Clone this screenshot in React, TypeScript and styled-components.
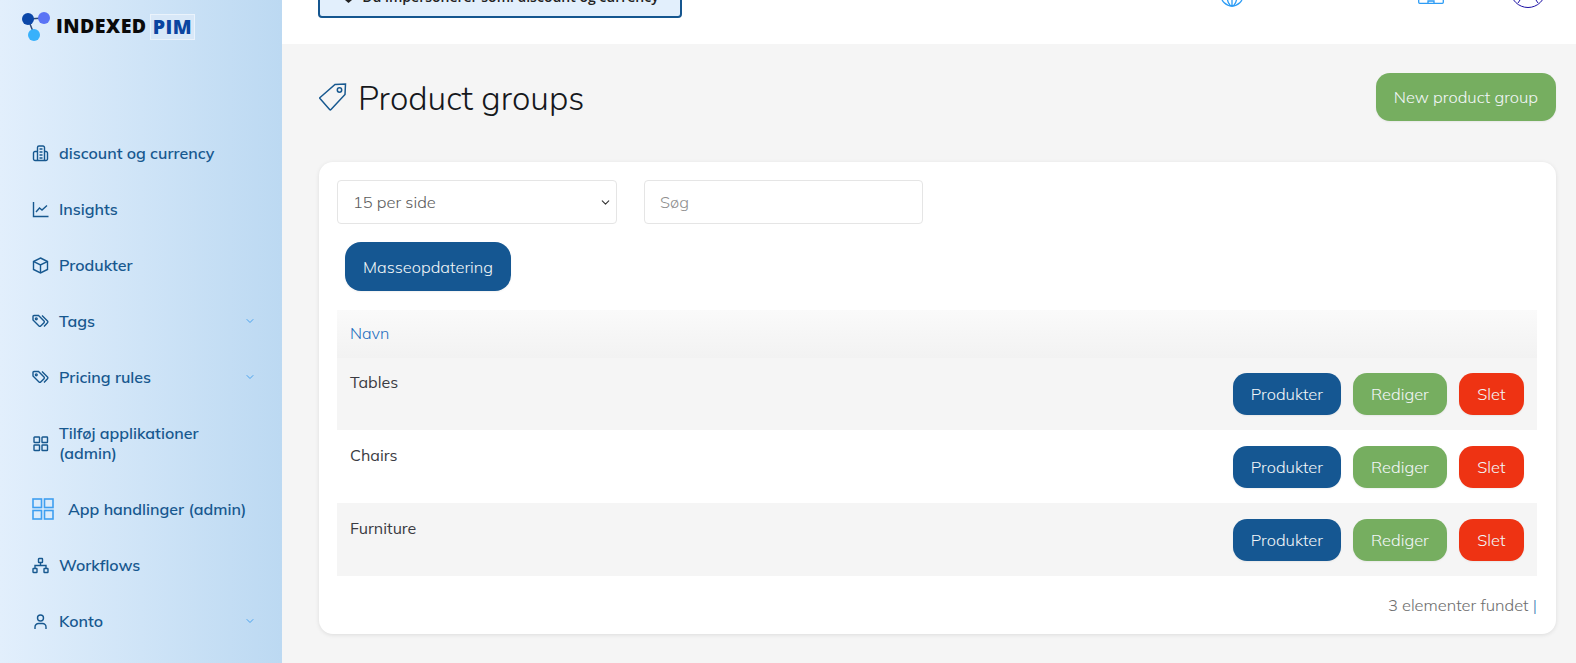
import React from 'react'
import styled, { createGlobalStyle } from 'styled-components'
import { ChevronDown } from 'lucide-react'

const FONT = `"Mulish", "Muli", "Nunito", "Open Sans", "Noto Sans", sans-serif`

const GlobalStyle = createGlobalStyle`
  html, body {
    margin: 0;
    height: 100%;
    overflow: hidden;
    background: #f5f5f5;
    font-family: ${FONT};
  }
  * { box-sizing: border-box; }
`

const Page = styled.div`
  display: flex;
  width: 100%;
  height: 663px;
  overflow: hidden;
`

const Sidebar = styled.aside`
  flex: 0 0 282px;
  background: linear-gradient(90deg, #e2effc 0%, #bcd9f2 100%);
  display: flex;
  flex-direction: column;
`

const Logo = styled.div`
  display: flex;
  align-items: flex-start;
  height: 125px;
  padding: 12px 0 0 22px;
`

const LogoWord = styled.span`
  font-family: "Open Sans", sans-serif;
  font-weight: 800;
  font-size: 19.5px;
  letter-spacing: 0.5px;
  line-height: 24px;
  color: #0a0a0a;
  margin: 2px 0 0 5px;
`

const LogoPim = styled(LogoWord)`
  color: #0b45a0;
  background: #d8e8f8;
  border: 1px solid #eaf3fc;
  margin-left: 3px;
  padding: 0 2px;
  height: 26px;
`

const NavList = styled.nav`
  display: flex;
  flex-direction: column;
`

const NavItem = styled.a<{ $tall?: boolean }>`
  display: flex;
  align-items: center;
  height: ${p => (p.$tall ? 76 : 56)}px;
  padding: 0 26px 0 32px;
  color: #17588f;
  font-size: 16px;
  font-weight: 600;
  line-height: 20px;
`

const NavIcon = styled.svg`
  flex: 0 0 17px;
  width: 17px;
  height: 17px;
  margin-right: 10px;
  fill: none;
  stroke: #17588f;
  stroke-width: 1.4;
`

const BigNavIcon = styled.svg`
  flex: 0 0 22px;
  width: 22px;
  height: 22px;
  margin-right: 14px;
  fill: none;
  stroke: #3f9ff0;
  stroke-width: 1.6;
`

const NavLabel = styled.span`
  flex: 1;
  max-width: 175px;
`

const WideLabel = styled.span`
  flex: 1;
  white-space: nowrap;
`

const Caret = styled(ChevronDown)`
  color: #4aa3ee;
  width: 12px;
  height: 12px;
  margin-left: auto;
`

const Main = styled.main`
  flex: 1;
  min-width: 0;
  display: flex;
  flex-direction: column;
`

const TopBar = styled.header`
  flex: 0 0 44px;
  height: 44px;
  background: #fff;
  display: flex;
  align-items: flex-end;
  padding: 0 30px 0 36px;
  overflow: hidden;
`

const ImpersonateBanner = styled.div`
  width: 364px;
  height: 40px;
  flex: none;
  margin-bottom: 26px;
  padding-bottom: 4px;
  display: flex;
  align-items: center;
  justify-content: center;
  gap: 6px;
  background: #e2effc;
  border: 2px solid #15568f;
  border-radius: 4px;
  color: #222;
  font-family: "Open Sans", sans-serif;
  font-size: 14px;
  font-weight: 600;
  white-space: nowrap;
`

const BannerIcon = styled.svg`
  width: 15px;
  height: 15px;
  flex: none;
  fill: #222;
`

const TopIcons = styled.div`
  margin-left: auto;
  display: flex;
  align-items: flex-end;
`

const GlobeIcon = styled.svg`
  width: 24px;
  height: 24px;
  margin-bottom: 37px;
  margin-right: 174px;
  fill: none;
  stroke: #2d9cf5;
  stroke-width: 1.3;
`

const CardIcon = styled.svg`
  width: 26px;
  height: 20px;
  margin-bottom: 40px;
  margin-right: 66px;
  fill: none;
  stroke: #2d9cf5;
  stroke-width: 1.3;
`

const AvatarIcon = styled.svg`
  width: 36px;
  height: 36px;
  margin-bottom: 36px;
  fill: none;
  stroke: #1c10a4;
  stroke-width: 1;
`

const Content = styled.div`
  flex: 1;
  padding: 29px 20px 0 37px;
`

const TitleRow = styled.div`
  display: flex;
  align-items: center;
  justify-content: space-between;
  height: 48px;
  margin-bottom: 41px;
`

const TitleGroup = styled.div`
  display: flex;
  align-items: center;
  gap: 9px;
`

const Title = styled.h1`
  margin: 0;
  padding-top: 3px;
  font-family: "Nunito", ${FONT};
  font-size: 33.6px;
  font-weight: 300;
  color: #16181c;
  line-height: 48px;
`

const Button = styled.button<{ $kind: 'blue' | 'green' | 'red'; $big?: boolean }>`
  font-family: ${FONT};
  font-size: 16.4px;
  font-weight: 300;
  color: #f2f6f8;
  border: 0;
  border-radius: ${p => (p.$big ? 16 : 14)}px;
  padding: 0 18px;
  height: ${p => (p.$big ? 49 : 42)}px;
  background: ${p => ({ blue: '#155792', green: '#76ae60', red: '#ee3313' }[p.$kind])};
  box-shadow: 0 1px 2px rgba(0, 0, 0, 0.06);
`

const NewButton = styled(Button)`
  height: 48px;
`

const DeleteButton = styled(Button)`
  padding: 0 18.5px;
`

const Card = styled.section`
  background: #fff;
  border-radius: 14px;
  box-shadow: 0 1px 4px rgba(0, 0, 0, 0.1);
  padding: 18px 19px 0 18px;
  height: 472px;
  display: flex;
  flex-direction: column;
`

const Filters = styled.div`
  display: flex;
  gap: 27px;
`

const SelectBox = styled.div`
  position: relative;
  width: 280px;
  height: 44px;
  display: flex;
  align-items: center;
  padding-left: 15px;
  border: 1px solid #e5e5e5;
  border-radius: 4px;
  color: #5b5b5b;
  font-size: 16.4px;
  font-weight: 300;
`

const SelectCaret = styled(ChevronDown)`
  position: absolute;
  right: 4px;
  top: 15px;
  width: 13px;
  height: 13px;
  color: #333;
`

const SearchBox = styled.input`
  width: 279px;
  height: 44px;
  padding: 0 15px;
  border: 1px solid #e5e5e5;
  border-radius: 4px;
  font-family: ${FONT};
  font-size: 16.4px;
  font-weight: 300;
  &::placeholder { color: #8f8f8f; opacity: 1; }
`

const MassRow = styled.div`
  padding: 18px 8px 19px;
  display: flex;
`

const TableHead = styled.div`
  height: 48px;
  flex: none;
  display: flex;
  align-items: center;
  padding: 0 13px 2px;
  background: linear-gradient(180deg, #fafafa 0%, #f2f2f2 100%);
  color: #1f6fbf;
  font-size: 16.2px;
  font-weight: 300;
`

const Row = styled.div<{ $shaded: boolean; $h: number }>`
  height: ${p => p.$h}px;
  flex: none;
  display: flex;
  justify-content: space-between;
  padding: 15px 13px 0 13px;
  background: ${p => (p.$shaded ? '#f5f5f5' : '#fff')};
  & + & { padding-top: 16px; }
`

const RowName = styled.span`
  margin-top: -1px;
  font-size: 16px;
  font-weight: 400;
  color: #3a3b42;
  line-height: 20px;
`

const RowActions = styled.div`
  display: flex;
  gap: 12px;
`

const Footer = styled.div`
  margin-top: 19px;
  text-align: right;
  font-size: 16.4px;
  font-weight: 300;
  color: #6e6e6e;
`

const FooterBar = styled.span`
  color: #3f7fb8;
`

const rows = [
  { name: 'Tables', h: 72 },
  { name: 'Chairs', h: 73 },
  { name: 'Furniture', h: 73 },
]

const Icons = {
  building: (
    <>
      <path d="M5.500 15.500V2.500A1.500 1.500 0 0 1 7 1h4a1.500 1.500 0 0 1 1.500 1.500v13" />
      <path d="M5.500 6.500H3A1.500 1.500 0 0 0 1.500 8v6A1.500 1.500 0 0 0 3 15.500h11a1.500 1.500 0 0 0 1.500-1.500V8A1.500 1.500 0 0 0 14 6.500h-1.500" />
      <path d="M7.500 4h3M7.500 7h3M7.500 10h3M7.500 13h3" />
    </>
  ),
  chart: <path d="M1.500 1v14.500h15M4 11l3.500-4 2.500 2 5-4.500" />,
  box: (
    <>
      <path d="M8.500 1 15.500 4.500v8L8.500 16 1.500 12.500v-8z" />
      <path d="M1.800 4.700 8.500 8l6.700-3.300M8.500 8v8" />
    </>
  ),
  tags: (
    <>
      <path d="M1 3.500v3.500l6 6a1.200 1.200 0 0 0 1.700 0l3.300-3.300a1.200 1.200 0 0 0 0-1.700L6.500 2.500H2A1 1 0 0 0 1 3.500z" />
      <path d="M10 2.500l5.500 5.500a1.200 1.200 0 0 1 0 1.700L12 13.500" />
      <circle cx="4.300" cy="5.800" r=".9" />
    </>
  ),
  grid: (
    <>
      <rect x="2" y="2" width="5.500" height="5.500" rx=".6" />
      <rect x="10" y="2" width="5.500" height="5.500" rx=".6" />
      <rect x="2" y="10" width="5.500" height="5.500" rx=".6" />
      <rect x="10" y="10" width="5.500" height="5.500" rx=".6" />
    </>
  ),
  tree: (
    <>
      <rect x="6.500" y="1.500" width="4" height="4" rx=".5" />
      <rect x="1" y="11.500" width="4" height="4" rx=".5" />
      <rect x="12" y="11.500" width="4" height="4" rx=".5" />
      <path d="M8.500 5.500v3M3 11.500V8.500h11v3" />
    </>
  ),
  user: (
    <>
      <circle cx="8.500" cy="5" r="3" />
      <path d="M3 16v-2a3.500 3.500 0 0 1 3.500-3.500h4A3.500 3.500 0 0 1 14 14v2" />
    </>
  ),
}

const SideItem = ({ icon, label, caret, tall }: { icon: React.ReactNode; label: string; caret?: boolean; tall?: boolean }) => (
  <NavItem $tall={tall}>
    <NavIcon viewBox="0 0 17 17">{icon}</NavIcon>
    <NavLabel>{label}</NavLabel>
    {caret && <Caret />}
  </NavItem>
)

export default function App() {
  return (
    <Page>
      <GlobalStyle />
      <Sidebar>
        <Logo>
          <svg width="29" height="29" viewBox="0 0 29 29">
            <path d="M6 7 L22 6 M6 7 L12 22" stroke="#2c4a78" strokeWidth="1.500" fill="none" />
            <circle cx="6" cy="7" r="6" fill="#0b47a8" />
            <circle cx="22" cy="6" r="6" fill="#5a74f5" />
            <circle cx="12" cy="23" r="6" fill="#38b1fb" />
          </svg>
          <LogoWord>INDEXED</LogoWord>
          <LogoPim>PIM</LogoPim>
        </Logo>
        <NavList>
          <SideItem icon={Icons.building} label="discount og currency" />
          <SideItem icon={Icons.chart} label="Insights" />
          <SideItem icon={Icons.box} label="Produkter" />
          <SideItem icon={Icons.tags} label="Tags" caret />
          <SideItem icon={Icons.tags} label="Pricing rules" caret />
          <SideItem icon={Icons.grid} label="Tilføj applikationer (admin)" tall />
          <NavItem>
            <BigNavIcon viewBox="0 0 22 22">
              <rect x="1" y="1" width="8.500" height="8.500" />
              <rect x="12.500" y="1" width="8.500" height="8.500" />
              <rect x="1" y="12.500" width="8.500" height="8.500" />
              <rect x="12.500" y="12.500" width="8.500" height="8.500" />
            </BigNavIcon>
            <WideLabel>App handlinger (admin)</WideLabel>
          </NavItem>
          <SideItem icon={Icons.tree} label="Workflows" />
          <SideItem icon={Icons.user} label="Konto" caret />
        </NavList>
      </Sidebar>
      <Main>
        <TopBar>
          <ImpersonateBanner>
            <BannerIcon viewBox="0 0 15 15"><path d="M7.500 1 14.500 8 7.500 14 .5 8z" /></BannerIcon>
            Du impersonerer som: discount og currency
          </ImpersonateBanner>
          <TopIcons>
            <GlobeIcon viewBox="0 0 24 24">
              <circle cx="12" cy="12" r="11" />
              <ellipse cx="12" cy="12" rx="5" ry="11" />
              <path d="M12 1v22M1 12h22" />
            </GlobeIcon>
            <CardIcon viewBox="0 0 26 20">
              <rect x=".7" y=".7" width="24.600" height="18.600" rx="1" />
              <path d="M10 19v-2h6v2" />
            </CardIcon>
            <AvatarIcon viewBox="0 0 36 36">
              <circle cx="18" cy="18" r="17.500" />
              <path d="M8 31l2-3M28 31l-2-3" />
            </AvatarIcon>
          </TopIcons>
        </TopBar>
        <Content>
          <TitleRow>
            <TitleGroup>
              <svg width="30" height="30" viewBox="2 0 30 30" fill="none" stroke="#17588f" strokeWidth="1.500">
                <path d="M2.500 16 18 2.500l10.500-.5-.5 10.500L14 27.500a1 1 0 0 1-1.400 0z" />
                <circle cx="22.500" cy="8" r="2.200" />
              </svg>
              <Title>Product groups</Title>
            </TitleGroup>
            <NewButton $kind="green">New product group</NewButton>
          </TitleRow>
          <Card>
            <Filters>
              <SelectBox>15 per side<SelectCaret /></SelectBox>
              <SearchBox placeholder="Søg" />
            </Filters>
            <MassRow><Button $kind="blue" $big>Masseopdatering</Button></MassRow>
            <TableHead>Navn</TableHead>
            {rows.map((r, i) => (
              <Row key={r.name} $shaded={i % 2 === 0} $h={r.h}>
                <RowName>{r.name}</RowName>
                <RowActions>
                  <Button $kind="blue">Produkter</Button>
                  <Button $kind="green">Rediger</Button>
                  <DeleteButton $kind="red">Slet</DeleteButton>
                </RowActions>
              </Row>
            ))}
            <Footer>3 elementer fundet <FooterBar>|</FooterBar></Footer>
          </Card>
        </Content>
      </Main>
    </Page>
  )
}
